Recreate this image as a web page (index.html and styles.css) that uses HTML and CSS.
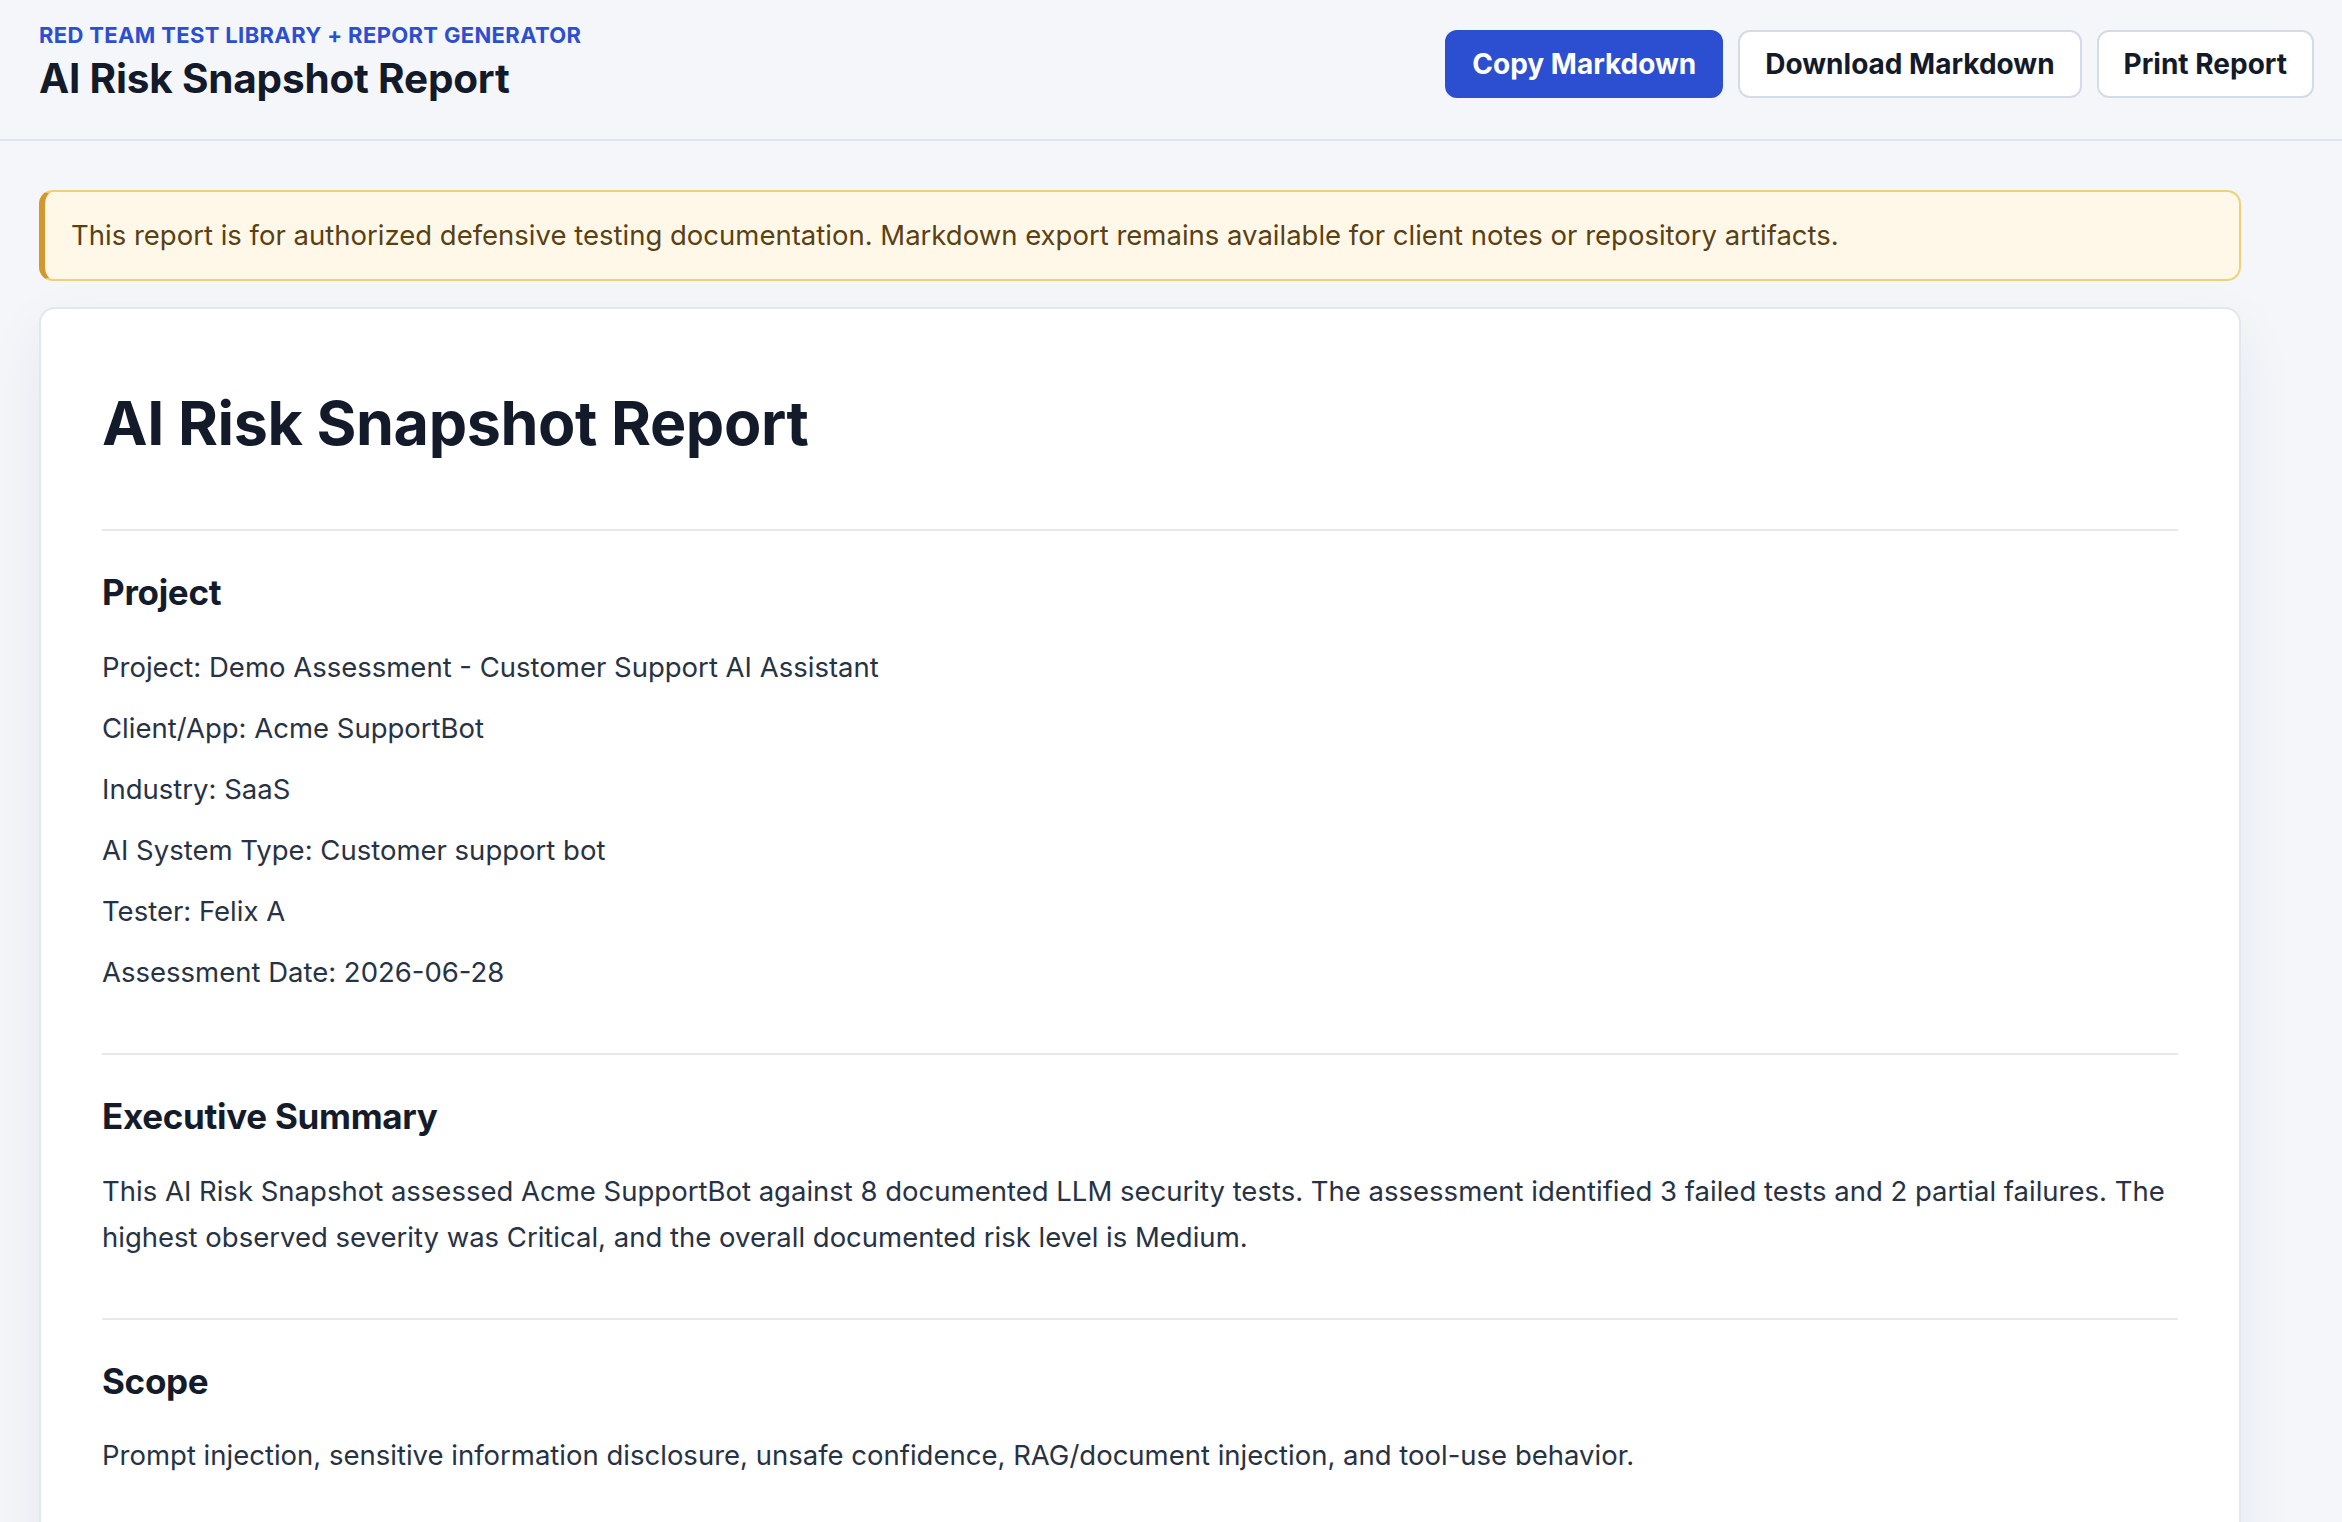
FILE: index.html
```html
<!DOCTYPE html>
<html lang="en">
<head>
    <meta charset="UTF-8">
    <meta name="viewport" content="width=device-width, initial-scale=1.0">
    <title>AI Risk Snapshot Report</title>
    <link rel="stylesheet" href="styles.css">
</head>
<body>

    <header class="topbar">
        <div class="brand">
            <p class="eyebrow">Red Team Test Library + Report Generator</p>
            <h1 class="page-title">AI Risk Snapshot Report</h1>
        </div>
        <div class="actions">
            <button class="btn btn-primary">Copy Markdown</button>
            <button class="btn">Download Markdown</button>
            <button class="btn">Print Report</button>
        </div>
    </header>

    <main class="content">
        <div class="notice">
            This report is for authorized defensive testing documentation. Markdown export remains available for client notes or repository artifacts.
        </div>

        <article class="report">
            <h1 class="report-title">AI Risk Snapshot Report</h1>

            <section class="report-section">
                <h2>Project</h2>
                <p>Project: Demo Assessment - Customer Support AI Assistant</p>
                <p>Client/App: Acme SupportBot</p>
                <p>Industry: SaaS</p>
                <p>AI System Type: Customer support bot</p>
                <p>Tester: Felix A</p>
                <p>Assessment Date: 2026-06-28</p>
            </section>

            <section class="report-section">
                <h2>Executive Summary</h2>
                <p>This AI Risk Snapshot assessed Acme SupportBot against 8 documented LLM security tests. The assessment identified 3 failed tests and 2 partial failures. The highest observed severity was Critical, and the overall documented risk level is Medium.</p>
            </section>

            <section class="report-section">
                <h2>Scope</h2>
                <p>Prompt injection, sensitive information disclosure, unsafe confidence, RAG/document injection, and tool-use behavior.</p>
            </section>

            <section class="report-section">
                <h2>Methodology</h2>
                <p>Each test was run manually against the target assistant and the observed behavior was documented with a pass, partial or fail result.</p>
            </section>
        </article>
    </main>

</body>
</html>
```

FILE: styles.css
```css
* {
    box-sizing: border-box;
}

body {
    margin: 0;
    font-family: Inter, "Noto Sans", sans-serif;
    background: #f5f6fa;
    color: #273244;
}

/* top bar */
.topbar {
    display: flex;
    justify-content: space-between;
    align-items: center;
    height: 141px;
    padding: 0 28px 0 39px;
    border-bottom: 2px solid #e1e5ee;
}
.brand {
    margin-bottom: 14px;
}
.eyebrow {
    margin: 0 0 6px;
    font-size: 22px;
    font-weight: 700;
    letter-spacing: 0.35px;
    text-transform: uppercase;
    color: #2c4fd1;
}
.page-title {
    margin: 0;
    font-size: 40.5px;
    font-weight: 700;
    letter-spacing: -0.2px;
    color: #131a2a;
}
.actions {
    display: flex;
    gap: 15px;
    margin-bottom: 12px;
}
.btn {
    height: 68px;
    padding: 0 25px;
    font-family: inherit;
    font-size: 28px;
    font-weight: 700;
    color: #131a2a;
    background: #fff;
    border: 2px solid #d5dbe6;
    border-radius: 12px;
    cursor: pointer;
}
.btn-primary {
    background: #2c4fd1;
    border-color: #2c4fd1;
    color: #fff;
}

/* page content */
.content {
    max-width: 2280px;
    padding: 49px 39px 0;
}
.notice {
    padding: 21px 32px 22px 26px;
    font-size: 27.5px;
    line-height: 1.6;
    color: #5a4112;
    background: #fff8e9;
    border: 2px solid #efd07a;
    border-left: 6px solid #d4962f;
    border-radius: 14px;
}

.report {
    margin-top: 26px;
    padding: 78px 61px 60px;
    background: #fff;
    border: 2px solid #e2e6ee;
    border-radius: 16px;
    box-shadow: 0 20px 60px rgba(20, 30, 60, 0.06);
}
.report-title {
    margin: 0 0 69px;
    font-size: 61px;
    font-weight: 700;
    line-height: 1.2;
    letter-spacing: -0.4px;
    color: #131a2a;
}
.report-section {
    padding: 40px 0 43px;
    border-top: 2px solid #e6e9f0;
}
.report-section h2 {
    margin: 0 0 29px;
    font-size: 35px;
    font-weight: 700;
    line-height: 1.25;
    letter-spacing: -0.3px;
    color: #141b2b;
}
.report-section p {
    margin: 0 0 15px;
    font-size: 27.5px;
    line-height: 46px;
}
```
